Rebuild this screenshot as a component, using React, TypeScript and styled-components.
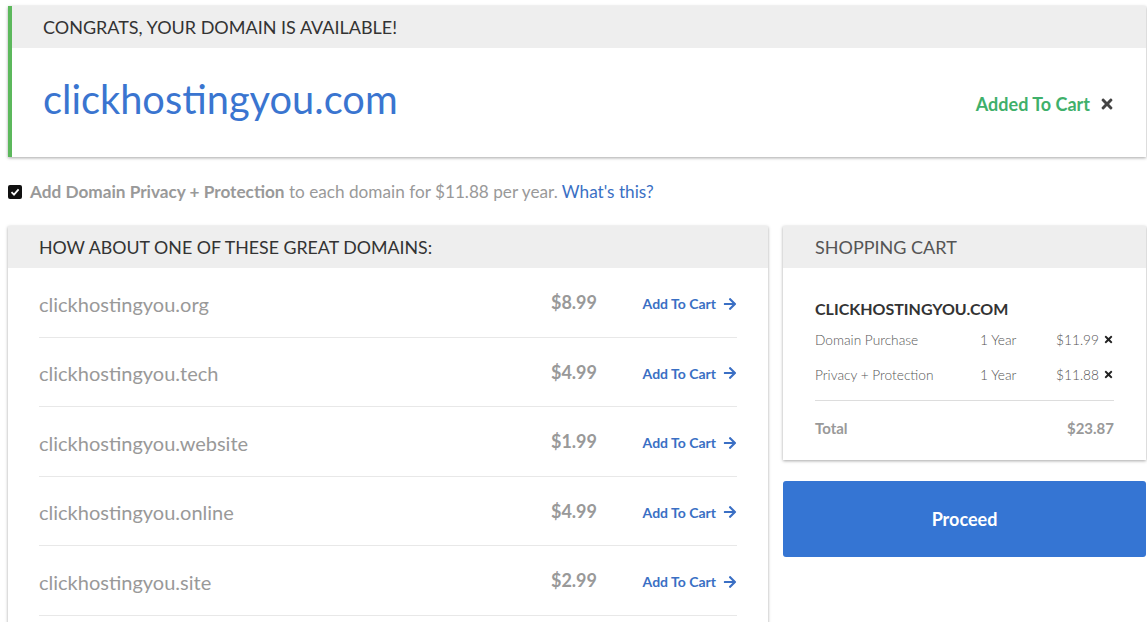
import React from 'react'
import styled, { createGlobalStyle } from 'styled-components';
import { FaTimes, FaArrowRight } from 'react-icons/fa';

const GlobalStyle = createGlobalStyle`
    body {
        margin: 0;
        background: #fff;
        font-family: Lato, "Open Sans", Arial, sans-serif;
    }
`

const Page = styled.div`
    padding: 6px 1px 0 8px;
    width: 1147px;
    box-sizing: border-box;
`

const Card = styled.div`
    background: #fff;
    box-shadow: 0px 1px 3px 0px rgba(0, 0, 0, 0.35);
`

const AvailableCard = styled(Card)`
    border-left: 4px solid #5cb85c;
`

const CardHeader = styled.div<{ $pad: number, $color: string, $size?: number }>`
    background: #eeeeee;
    height: 42px;
    display: flex;
    align-items: center;
    padding-left: ${p => p.$pad}px;
    font-size: ${p => p.$size || 18}px;
    color: ${p => p.$color};
    text-transform: uppercase;
`

const AvailableBody = styled.div`
    height: 109px;
    display: flex;
    align-items: center;
    justify-content: space-between;
    padding: 0 31px 0 31px;
`

const DomainTitle = styled.div`
    font-size: 39.8px;
    color: #3a75d0;
    margin-top: -9px;
`

const AddedTag = styled.div`
    display: flex;
    align-items: center;
    gap: 9px;
    font-size: 18px;
    font-weight: 700;
    color: #3fb06b;
    margin-top: 2px;
    svg { color: #444; font-size: 16px; }
`

const PrivacyRow = styled.div`
    display: flex;
    align-items: center;
    gap: 8px;
    margin-top: 24px;
    font-size: 17.2px;
    color: #999;
    b { font-weight: 700; }
    a { color: #3a6fc4; text-decoration: none; }
`

const CheckBox = styled.span`
    width: 14px;
    height: 14px;
    background: #111;
    border-radius: 2px;
    display: flex;
    align-items: center;
    justify-content: center;
`

const Columns = styled.div`
    display: flex;
    gap: 15px;
    margin-top: 24px;
    align-items: flex-start;
`

const SuggestPanel = styled(Card)`
    width: 760px;
    flex-shrink: 0;
`

const SuggestList = styled.div`
    padding: 0 31px 30px 31px;
`

const SuggestRow = styled.div`
    height: 69.5px;
    border-bottom: 1px solid #e8e8e8;
    display: grid;
    grid-template-columns: 1fr auto 140px;
    align-items: center;
    box-sizing: border-box;
    padding-top: 3px;
`

const SuggestName = styled.div`
    font-size: 20px;
    color: #999;
`

const SuggestPrice = styled.div`
    font-size: 18px;
    font-weight: 700;
    color: #999;
    margin-top: -3px;
`

const AddLink = styled.a`
    justify-self: end;
    display: flex;
    align-items: center;
    gap: 7px;
    font-size: 14px;
    font-weight: 700;
    color: #3a6fc4;
    svg { font-size: 14px; }
`

const SidePanel = styled.div`
    flex: 1;
    display: flex;
    flex-direction: column;
    gap: 21px;
`

const CartBody = styled.div`
    padding: 31px 32px 28px 32px;
`

const CartDomain = styled.div`
    font-size: 16px;
    font-weight: 700;
    color: #333;
    margin-bottom: 4px;
`

const CartLine = styled.div`
    display: grid;
    grid-template-columns: 165px 1fr auto 15px;
    align-items: center;
    height: 35px;
    font-size: 13.7px;
    font-weight: 300;
    color: #555;
    svg { justify-self: end; color: #222; font-size: 11px; }
`

const Divider = styled.div`
    border-top: 1px solid #ddd;
    margin-top: 8px;
`

const TotalLine = styled.div`
    display: flex;
    justify-content: space-between;
    align-items: center;
    height: 54px;
    margin-bottom: -23px;
    font-size: 15px;
    font-weight: 700;
    color: #999;
`

const ProceedButton = styled.button`
    height: 76px;
    border: none;
    border-radius: 3px;
    background: #3575d3;
    color: #fff;
    font-family: inherit;
    font-size: 18px;
    font-weight: 700;
`

const suggestions = [
    { name: 'clickhostingyou.org', price: '$8.99' },
    { name: 'clickhostingyou.tech', price: '$4.99' },
    { name: 'clickhostingyou.website', price: '$1.99' },
    { name: 'clickhostingyou.online', price: '$4.99' },
    { name: 'clickhostingyou.site', price: '$2.99' },
];

const cartItems = [
    { label: 'Domain Purchase', term: '1 Year', price: '$11.99' },
    { label: 'Privacy + Protection', term: '1 Year', price: '$11.88' },
];

export default function App() {
    return (
        <Page>
            <GlobalStyle />
            <AvailableCard>
                <CardHeader $pad={31} $color="#333">Congrats, your domain is available!</CardHeader>
                <AvailableBody>
                    <DomainTitle>clickhostingyou.com</DomainTitle>
                    <AddedTag>Added To Cart <FaTimes /></AddedTag>
                </AvailableBody>
            </AvailableCard>

            <PrivacyRow>
                <CheckBox>
                    <svg width="10" height="10" viewBox="0 0 10 10">
                        <path d="M1.5 5.2 L4 7.6 L8.6 2.4" stroke="#fff" strokeWidth="1.8" fill="none" />
                    </svg>
                </CheckBox>
                <span><b>Add Domain Privacy + Protection</b> to each domain for $11.88 per year. <a href="#">What's this?</a></span>
            </PrivacyRow>

            <Columns>
                <SuggestPanel>
                    <CardHeader $pad={31} $color="#333" $size={17.8}>How about one of these great domains:</CardHeader>
                    <SuggestList>
                        {suggestions.map(s => (
                            <SuggestRow key={s.name}>
                                <SuggestName>{s.name}</SuggestName>
                                <SuggestPrice>{s.price}</SuggestPrice>
                                <AddLink>Add To Cart <FaArrowRight /></AddLink>
                            </SuggestRow>
                        ))}
                    </SuggestList>
                </SuggestPanel>

                <SidePanel>
                    <Card>
                        <CardHeader $pad={32} $color="#555">Shopping Cart</CardHeader>
                        <CartBody>
                            <CartDomain>CLICKHOSTINGYOU.COM</CartDomain>
                            {cartItems.map(item => (
                                <CartLine key={item.label}>
                                    <span>{item.label}</span>
                                    <span>{item.term}</span>
                                    <span>{item.price}</span>
                                    <FaTimes />
                                </CartLine>
                            ))}
                            <Divider />
                            <TotalLine>
                                <span>Total</span>
                                <span>$23.87</span>
                            </TotalLine>
                        </CartBody>
                    </Card>
                    <ProceedButton>Proceed</ProceedButton>
                </SidePanel>
            </Columns>
        </Page>
    );
}
